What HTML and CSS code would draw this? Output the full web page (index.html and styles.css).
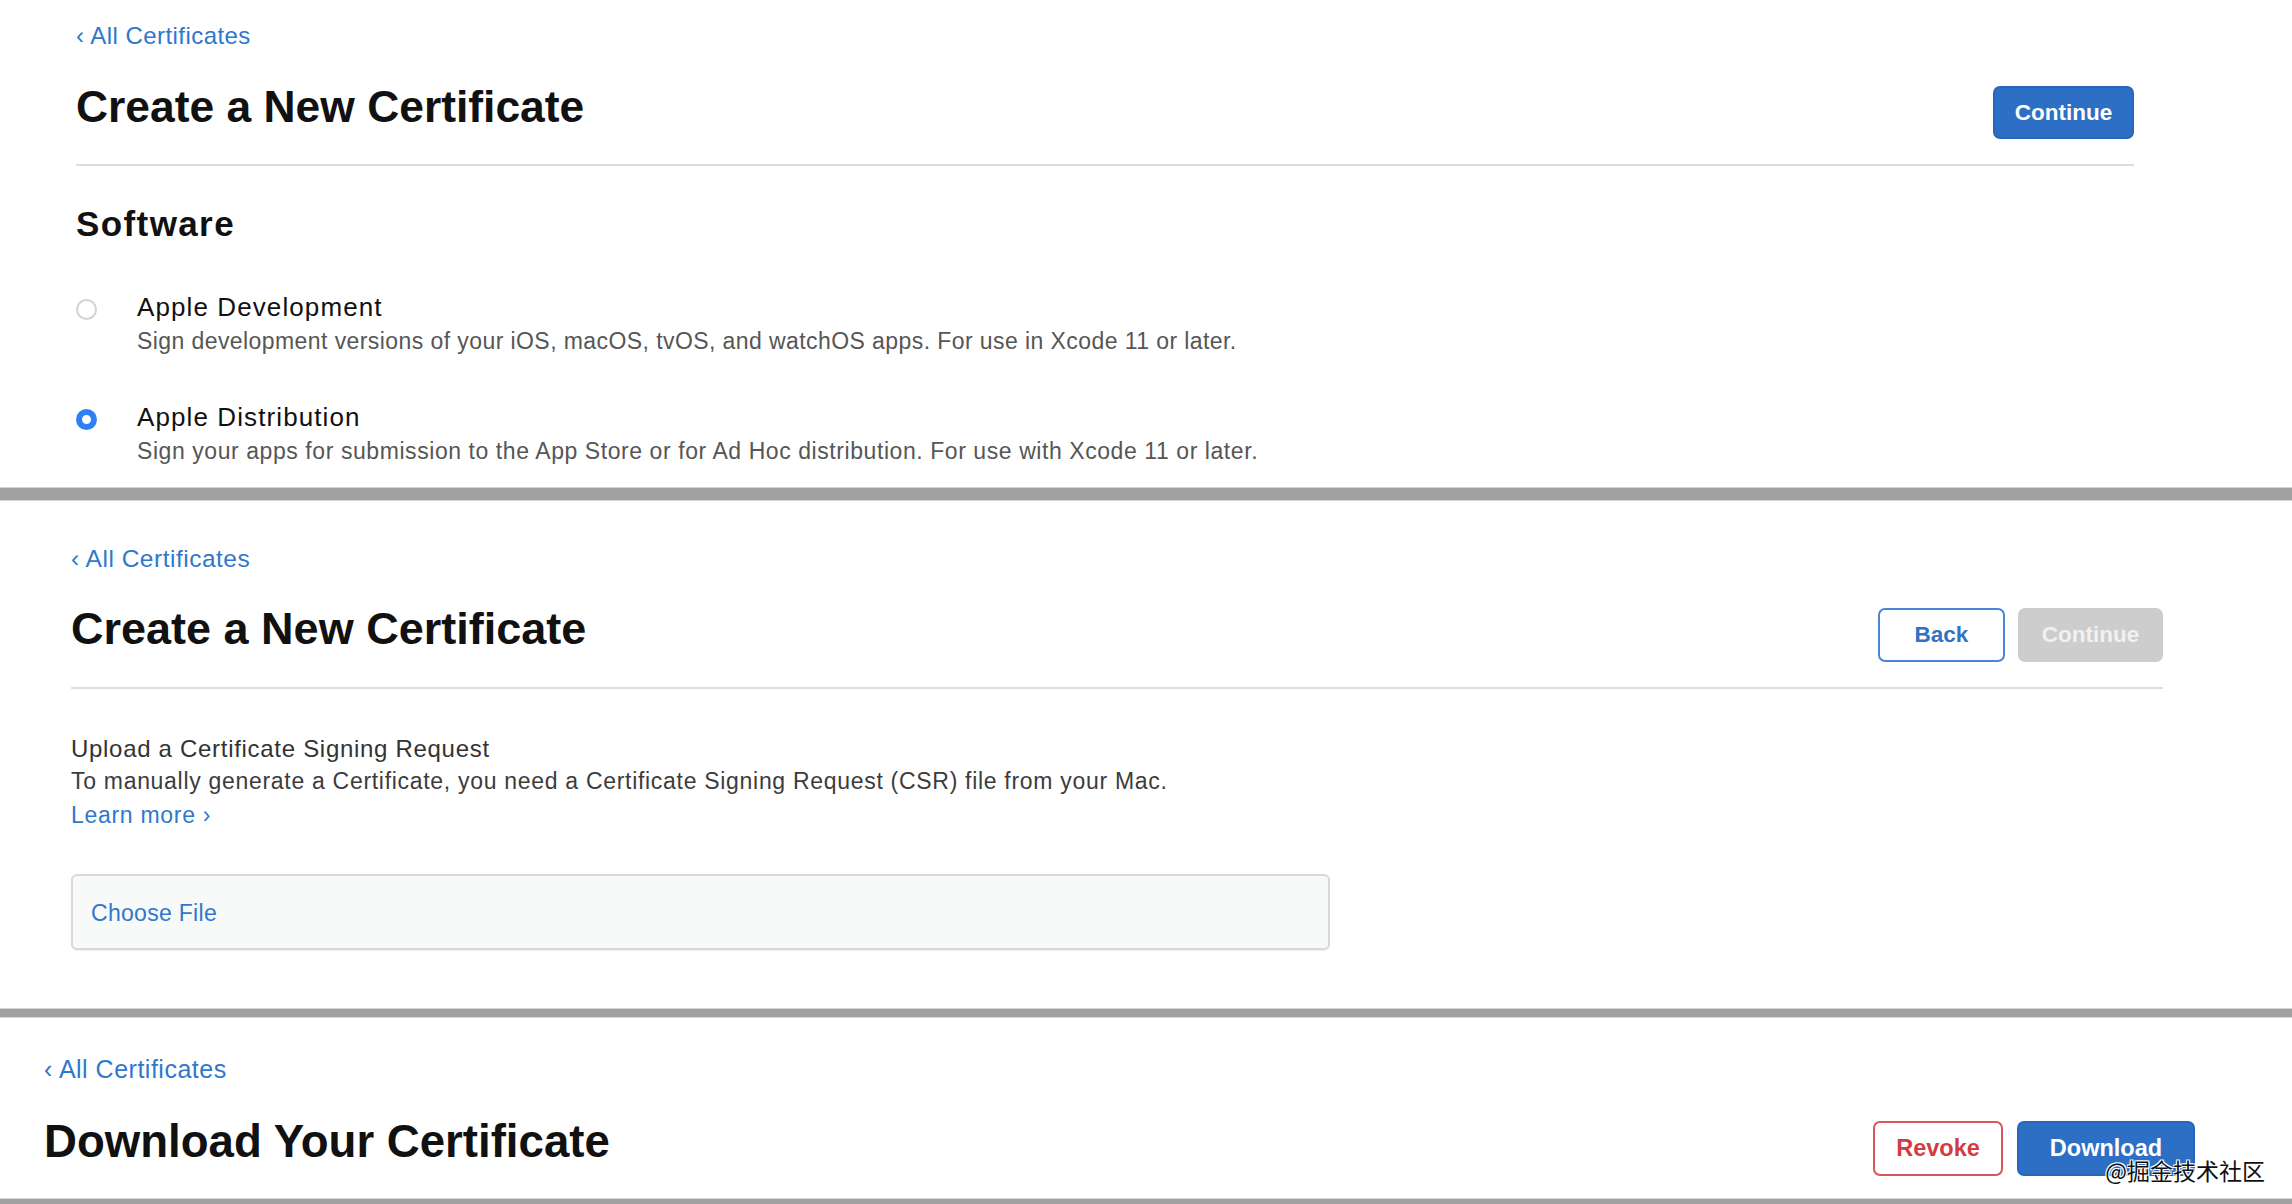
FILE: index.html
```html
<!DOCTYPE html>
<html lang="en">
<head>
<meta charset="utf-8">
<title>Certificates</title>
<link rel="stylesheet" href="styles.css">
</head>
<body>
<section class="panel p1">
  <a class="back" href="#">‹ All Certificates</a>
  <div class="head">
    <h1 class="title">Create a New Certificate</h1>
    <div class="actions">
      <button class="btn primary w-continue">Continue</button>
    </div>
  </div>
  <h2 class="section-title">Software</h2>
  <div class="options">
    <div class="opt">
      <span class="radio"></span>
      <div class="opt-body">
        <div class="opt-title">Apple Development</div>
        <div class="opt-desc">Sign development versions of your iOS, macOS, tvOS, and watchOS apps. For use in Xcode 11 or later.</div>
      </div>
    </div>
    <div class="opt">
      <span class="radio checked"></span>
      <div class="opt-body">
        <div class="opt-title">Apple Distribution</div>
        <div class="opt-desc opt-desc-wide">Sign your apps for submission to the App Store or for Ad Hoc distribution. For use with Xcode 11 or later.</div>
      </div>
    </div>
  </div>
</section>
<div class="band band-1"></div>
<section class="panel p2">
  <a class="back" href="#">‹ All Certificates</a>
  <div class="head">
    <h1 class="title">Create a New Certificate</h1>
    <div class="actions">
      <button class="btn outline w-back">Back</button>
      <button class="btn disabled w-continue2">Continue</button>
    </div>
  </div>
  <div class="upload">
    <div class="upload-title">Upload a Certificate Signing Request</div>
    <div class="upload-text">To manually generate a Certificate, you need a Certificate Signing Request (CSR) file from your Mac.</div>
    <a class="learn" href="#">Learn more ›</a>
  </div>
  <div class="filebox"><span class="choose">Choose File</span></div>
</section>
<div class="band band-2"></div>
<section class="panel p3">
  <a class="back" href="#">‹ All Certificates</a>
  <div class="head">
    <h1 class="title">Download Your Certificate</h1>
    <div class="actions">
      <button class="btn danger w-revoke">Revoke</button>
      <button class="btn primary w-download">Download</button>
    </div>
  </div>
  <div class="watermark">@掘金技术社区</div>
</section>
<div class="band band-3"></div>
</body>
</html>
```

FILE: styles.css
```css
html, body {
  margin: 0;
  padding: 0;
  background: #ffffff;
}
body {
  font-family: "Liberation Sans", Arial, sans-serif;
  color: #111111;
  overflow: hidden;
  height: 1204px;
}

.panel {
  position: relative;
  display: flex;
  flex-direction: column;
  align-items: stretch;
}
.p1 { padding: 21px 158px 20px 76px; }
.p2 { padding: 43px 129px 58px 71px; }
.p3 { padding: 35.5px 97px 22px 44px; }

.back {
  display: block;
  align-self: flex-start;
  font-size: 24px;
  letter-spacing: 0.45px;
  line-height: 30px;
  color: #2f78cc;
  text-decoration: none;
}
.p2 .back { font-size: 24.5px; letter-spacing: 0.5px; }
.p3 .back { font-size: 25px; letter-spacing: 0.5px; }

.head {
  display: flex;
  justify-content: space-between;
  align-items: flex-start;
  margin-top: 28.5px;
}
.p1 .head, .p2 .head {
  padding-bottom: 25px;
  border-bottom: 2px solid #dedede;
}
.p2 .head { margin-top: 28px; }
.p3 .head { margin-top: 31px; }

.title {
  margin: 0;
  font-size: 44.4px;
  line-height: 54px;
  font-weight: 700;
  color: #111111;
}
.p2 .title { font-size: 45px; }
.p3 .title { font-size: 45.6px; }

.actions {
  display: flex;
  gap: 13px;
  margin-top: 6.5px;
}
.p3 .actions { gap: 14px; }

.btn {
  box-sizing: border-box;
  font-family: "Liberation Sans", Arial, sans-serif;
  font-size: 22.5px;
  font-weight: 700;
  border-radius: 7px;
  border: 2px solid transparent;
  padding: 0;
  cursor: pointer;
  display: flex;
  align-items: center;
  justify-content: center;
}
.p3 .btn { font-size: 23.5px; height: 55px; }
.primary {
  background: #2d6fc5;
  border-color: #2766bd;
  color: #ffffff;
}
.outline {
  background: #ffffff;
  border-color: #4a86d4;
  color: #2f72c6;
}
.disabled {
  background: #cdcdcd;
  border-color: #cdcdcd;
  color: #f1f1f1;
}
.danger {
  background: #ffffff;
  border-color: #d9565b;
  color: #d23b41;
}
.w-continue { width: 141px; height: 53px; }
.w-back { width: 127px; height: 54px; }
.w-continue2 { width: 145px; height: 54px; }
.w-revoke { width: 130px; }
.w-download { width: 178px; }

.section-title {
  margin: 36px 0 0 0;
  font-size: 35px;
  letter-spacing: 1.4px;
  line-height: 44px;
  font-weight: 700;
  color: #111111;
}

.options {
  display: flex;
  flex-direction: column;
  gap: 44px;
  margin-top: 44.5px;
}
.opt {
  display: flex;
  align-items: flex-start;
  gap: 40px;
}
.radio {
  box-sizing: border-box;
  flex: none;
  width: 21px;
  height: 21px;
  margin-top: 8px;
  border-radius: 50%;
  border: 2px solid #d2d2d2;
  background: #ffffff;
}
.radio.checked {
  border: 6.5px solid #2f7ff5;
}
.opt-title {
  font-size: 26px;
  letter-spacing: 1.1px;
  line-height: 32px;
  color: #111111;
}
.opt-desc {
  font-size: 23px;
  letter-spacing: 0.42px;
  line-height: 32px;
  margin-top: 2px;
  color: #565656;
}
.opt-desc-wide { letter-spacing: 0.57px; }

.upload {
  display: flex;
  flex-direction: column;
  align-items: flex-start;
  margin-top: 43.5px;
}
.upload-title {
  font-size: 24px;
  letter-spacing: 0.7px;
  line-height: 32px;
  color: #333333;
}
.upload-text {
  font-size: 23px;
  letter-spacing: 0.7px;
  line-height: 32px;
  color: #3c3c3c;
}
.learn {
  margin-top: 2px;
  font-size: 23px;
  letter-spacing: 0.7px;
  line-height: 32px;
  color: #2f78cc;
  text-decoration: none;
}

.filebox {
  box-sizing: border-box;
  margin-top: 43.5px;
  width: 1259px;
  height: 76px;
  border: 2px solid #d9d9d9;
  border-radius: 6px;
  background: #f8f9f9;
  box-shadow: 0 1px 1px rgba(0, 0, 0, 0.06);
  display: flex;
  align-items: center;
  padding-left: 18px;
  padding-top: 2px;
}
.choose {
  font-size: 23px;
  letter-spacing: 0.3px;
  color: #2f78cc;
}

.band {
  background: #a0a0a0;
  border-top: 1px solid #d4d4d4;
  border-bottom: 1px solid #d4d4d4;
}
.band-1 { height: 12px; }
.band-2 { height: 8px; }
.band-3 { height: 8px; }

.watermark {
  position: absolute;
  right: 27px;
  top: 137px;
  font-family: "Noto Sans CJK SC", sans-serif;
  font-size: 23px;
  line-height: 30px;
  color: #111111;
  text-shadow: 1px 1px 0 #fff, -1px -1px 0 #fff, 1px -1px 0 #fff, -1px 1px 0 #fff;
}
```
